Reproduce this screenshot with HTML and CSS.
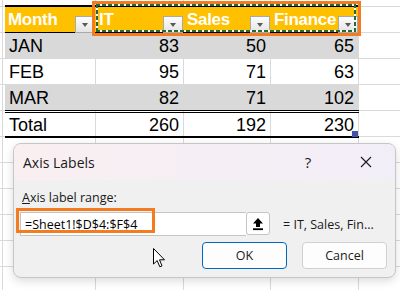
FILE: index.html
```html
<!DOCTYPE html>
<html>

<head>
    <meta charset="utf-8" />
    <title>Axis Labels</title>
    <link rel="stylesheet" href="styles.css">
</head>

<body>
    <div class="sheet">
        <div class="row head">
            <div class="cell col-a"><span class="label">Month</span><span class="dd"></span></div>
            <div class="cell col-b"><span class="label">IT</span><span class="dd"></span></div>
            <div class="cell col-c"><span class="label">Sales</span><span class="dd"></span></div>
            <div class="cell col-d"><span class="label">Finance</span><span class="dd"></span></div>
        </div>
        <div class="row shade">
            <div class="cell col-a">JAN</div>
            <div class="cell col-b num">83</div>
            <div class="cell col-c num">50</div>
            <div class="cell col-d num">65</div>
        </div>
        <div class="row">
            <div class="cell col-a">FEB</div>
            <div class="cell col-b num">95</div>
            <div class="cell col-c num">71</div>
            <div class="cell col-d num">63</div>
        </div>
        <div class="row shade last">
            <div class="cell col-a">MAR</div>
            <div class="cell col-b num">82</div>
            <div class="cell col-c num">71</div>
            <div class="cell col-d num">102</div>
        </div>
        <div class="row total">
            <div class="cell col-a">Total</div>
            <div class="cell col-b num">260</div>
            <div class="cell col-c num">192</div>
            <div class="cell col-d num">230</div>
        </div>
        <div class="ants"></div>
        <div class="mark head-mark"></div>
        <div class="handle"></div>
    </div>

    <div class="dialog">
        <div class="titlebar">
            <span class="title">Axis Labels</span>
            <span class="tb-btn">?</span>
            <span class="tb-btn">
                <svg width="12" height="12" viewBox="0 0 12 12">
                    <path d="M1 1 L11 11 M11 1 L1 11" stroke="#1a1a1a" stroke-width="1.1" fill="none" />
                </svg>
            </span>
        </div>
        <div class="dlg-body">
            <div class="field-label"><u>A</u>xis label range:</div>
            <div class="field-row">
                <div class="ref-input">
                    <span class="ref-text">=Sheet1!$D$4:$F$4</span>
                    <span class="collapse-btn">
                        <svg width="12" height="14" viewBox="0 0 12 14">
                            <path d="M6 1 L11 6.5 L8 6.5 L8 10 L4 10 L4 6.5 L1 6.5 Z" fill="#000" />
                            <rect x="1" y="11.3" width="10" height="1.8" fill="#000" />
                        </svg>
                    </span>
                </div>
                <span class="ref-value">= IT, Sales, Fin...</span>
            </div>
            <div class="buttons">
                <button class="btn default">OK</button>
                <button class="btn">Cancel</button>
            </div>
        </div>
        <div class="mark input-mark"></div>
    </div>

    <svg class="cursor" width="13" height="20" viewBox="0 0 13 20">
        <path d="M0.5 0.5 L0.5 16 L4.2 12.6 L6.8 18.8 L9 17.9 L6.5 11.8 L11.5 11.8 Z" fill="#fff" stroke="#000" stroke-width="1" stroke-linejoin="round" />
    </svg>
</body>

</html>
```

FILE: styles.css
```css
* {
    box-sizing: border-box;
}

html,
body {
    margin: 0;
}

body {
    width: 400px;
    height: 290px;
    overflow: hidden;
    position: relative;
    font-family: "Liberation Sans", Arial, sans-serif;
    background-color: #fff;
    background-image:
        linear-gradient(#dadada, #dadada),
        linear-gradient(#dadada, #dadada),
        linear-gradient(#dadada, #dadada),
        linear-gradient(#dadada, #dadada),
        linear-gradient(#dadada, #dadada),
        linear-gradient(to bottom, transparent 25px, #dadada 25px);
    background-size: 1px 100%, 1px 100%, 1px 100%, 1px 100%, 1px 100%, 100% 26px;
    background-position: 2px 0, 95px 0, 183px 0, 270px 0, 358px 0, 0 7px;
    background-repeat: no-repeat, no-repeat, no-repeat, no-repeat, no-repeat, repeat-y;
}

/* spreadsheet */

.sheet {
    position: relative;
    margin: 5px 0 0 5px;
    width: 354px;
    font-size: 18px;
}

.row {
    display: flex;
    height: 26px;
}

.cell {
    display: flex;
    align-items: center;
    padding: 1px 5px 0 4px;
    white-space: nowrap;
}

.col-a {
    width: 91px;
}

.col-b {
    width: 88px;
}

.col-c {
    width: 87px;
}

.col-d {
    width: 88px;
}

.num {
    justify-content: flex-end;
}

.head {
    height: 28px;
    background-color: #ffc000;
    border-top: 2px solid #000;
    border-bottom: 1px solid #000;
}

.head .cell {
    padding: 0 1px 0 3px;
    color: #fff;
    font-size: 17px;
    font-weight: bold;
    letter-spacing: -0.3px;
}

.label {
    flex: 1;
    min-width: 0;
    overflow: hidden;
}

.dd {
    position: relative;
    flex: none;
    align-self: flex-end;
    width: 20px;
    height: 17px;
    margin-bottom: -1px;
    border: 1px solid #a9a9a9;
    background: linear-gradient(#fdfdfd, #e4e4e4);
}

.dd::after {
    content: "";
    position: absolute;
    left: 6px;
    top: 6px;
    border-left: 3.5px solid transparent;
    border-right: 3.5px solid transparent;
    border-top: 4px solid #595959;
}

.shade {
    background-color: #d9d9d9;
}

.last {
    height: 25px;
}

.total {
    height: 28px;
    border-top: 3px double #000;
    border-bottom: 2px solid #000;
}

.ants {
    position: absolute;
    left: 91px;
    top: -1px;
    width: 260px;
    height: 28px;
    background:
        repeating-linear-gradient(90deg, #1f6b3e 0 4px, #fff 4px 6px) top / 100% 2px no-repeat,
        repeating-linear-gradient(90deg, #1f6b3e 0 4px, #fff 4px 6px) bottom / 100% 2px no-repeat,
        repeating-linear-gradient(180deg, #1f6b3e 0 4px, #fff 4px 6px) left / 2px 100% no-repeat,
        repeating-linear-gradient(180deg, #1f6b3e 0 4px, #fff 4px 6px) right / 2px 100% no-repeat;
}

.mark {
    position: absolute;
    border: 3px solid #f47b20;
}

.head-mark {
    left: 87px;
    top: -4px;
    width: 269px;
    height: 35px;
}

.handle {
    position: absolute;
    left: 347px;
    top: 126px;
    width: 6px;
    height: 6px;
    background-color: #4052a6;
}

/* dialog */

.dialog {
    position: absolute;
    left: 13px;
    top: 143px;
    width: 383px;
    height: 135px;
    display: flex;
    flex-direction: column;
    background-color: #f0f0f0;
    border: 1px solid #c6c6c6;
    border-radius: 8px;
    box-shadow: 0 3px 10px rgba(0, 0, 0, 0.14);
    font-family: "Open Sans", "Noto Sans", sans-serif;
    font-size: 12.5px;
    color: #1a1a1a;
    overflow: hidden;
}

.titlebar {
    display: flex;
    align-items: center;
    height: 36px;
    padding-left: 9px;
    background: linear-gradient(90deg, #f9eff1, #f2eef8);
}

.title {
    flex: 1;
    font-size: 14px;
}

.tb-btn {
    display: flex;
    align-items: center;
    justify-content: center;
    width: 58px;
    height: 36px;
    font-size: 15px;
}

.dlg-body {
    flex: 1;
    display: flex;
    flex-direction: column;
    padding: 10px 8px 0 6px;
}

.field-label {
    height: 16px;
    line-height: 16px;
    margin-left: 2px;
}

.field-row {
    display: flex;
    align-items: center;
    margin-top: 6px;
}

.ref-input {
    display: flex;
    width: 250px;
    height: 24px;
}

.ref-text {
    flex: 1;
    display: flex;
    align-items: center;
    padding-left: 4px;
    background-color: #fff;
    border: 1px solid #c4c4c4;
    border-right: 0;
    font-size: 12.5px;
    color: #000;
}

.collapse-btn {
    display: flex;
    align-items: center;
    justify-content: center;
    width: 24px;
    height: 23px;
    background-color: #fff;
    border: 1px solid #c4c4c4;
    border-radius: 3px;
}

.ref-value {
    margin-left: 13px;
}

.buttons {
    display: flex;
    justify-content: flex-end;
    gap: 15px;
    margin-top: 6px;
}

.btn {
    width: 85px;
    height: 27px;
    padding: 0;
    background-color: #fdfdfd;
    border: 1px solid #d0d0d0;
    border-radius: 4px;
    font-family: "Open Sans", "Noto Sans", sans-serif;
    font-size: 12.5px;
    color: #1a1a1a;
}

.btn.default {
    border-color: #0067c0;
}

.input-mark {
    left: 2px;
    top: 64px;
    width: 139px;
    height: 25px;
}

.cursor {
    position: absolute;
    left: 153px;
    top: 248px;
}
```
